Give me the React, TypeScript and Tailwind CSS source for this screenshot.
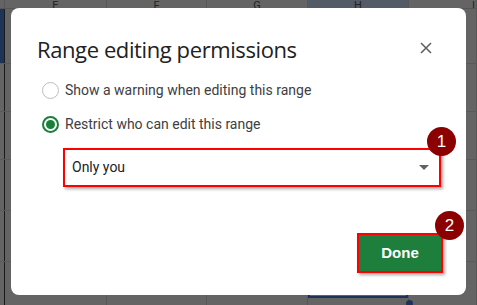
import React from "react";

const COLS = [
  { w: "w-[5px]", label: "", end: false },
  { w: "w-[102px]", label: "E", end: false },
  { w: "w-[100px]", label: "F", end: false },
  { w: "w-[101px]", label: "G", end: false },
  { w: "w-[101px]", label: "H", end: false },
  { w: "flex-1", label: "I", end: true },
];

const ROWS = ["h-[55px]", "h-[48px]", "h-[48px]", "h-[51px]", "h-[51px]", "h-[21px]", "flex-1"];

function Backdrop() {
  return (
    <div className="flex flex-col w-full h-full">
      <div className="flex h-[9px] border-b border-[#555]">
        {COLS.map((c, i) => (
          <div
            key={i}
            className={`${c.w} ${i === 4 ? "bg-[#535b67]" : ""} border-r border-[#575757] flex items-end ${
              c.end ? "justify-end pr-[1px]" : "justify-center"
            } overflow-hidden`}
          >
            <span className="text-[11px] leading-[11px] text-[#222] mb-[-3px]">{c.label}</span>
          </div>
        ))}
      </div>
      {ROWS.map((h, r) => (
        <div key={r} className={`flex ${h} ${r < 5 ? "border-b border-[#595959]" : ""}`}>
          {COLS.map((c, i) => (
            <div
              key={i}
              className={`${c.w} ${i === 0 ? "border-r border-[#1a1a1a]" : "border-r border-[#575757]"} ${
                i === 0 && r === 0 ? "bg-[#1d3458]" : ""
              } flex flex-col`}
            >
              {r === 6 && i === 4 ? (
                <div className="mt-[2px] h-[13px] border-x-2 border-b-2 border-[#1d3458]" />
              ) : null}
            </div>
          ))}
        </div>
      ))}
    </div>
  );
}

export default function App() {
  return (
    <div
      className="relative w-[477px] h-[305px] overflow-hidden bg-[#646464]"
      style={{ fontFamily: "Roboto, 'Liberation Sans', sans-serif" }}
    >
      <Backdrop />
      <div className="absolute left-[406px] top-[300px] w-[7px] h-[7px] rounded-full bg-[#1d3458]" />

      {/* dialog */}
      <div className="absolute left-[11px] top-[8px] w-[455px] h-[287px] bg-white rounded-[8px] flex flex-col">
        <div className="flex items-center justify-between pl-[26px] pr-[34px] pt-[27px]">
          <div
            className="text-[22px] leading-[28px] text-[#202124]"
            style={{ fontFamily: "'Open Sans', Roboto, sans-serif", letterSpacing: "-0.4px" }}
          >
            Range editing permissions
          </div>
          <svg width="12" height="12" viewBox="0 0 12 12" className="mb-[2px]">
            <path d="M1 1L11 11M11 1L1 11" stroke="#5f6368" strokeWidth="1.6" />
          </svg>
        </div>
        <div className="flex flex-col gap-[16px] pl-[31px] mt-[18px]">
          <div className="flex items-center gap-[6px] h-[18px]">
            <div className="w-[17px] h-[17px] rounded-full border border-[#bdbdbd]" />
            <span className="text-[14px] text-[#3c4043]">Show a warning when editing this range</span>
          </div>
          <div className="flex items-center gap-[6px] h-[18px]">
            <div className="w-[17px] h-[17px] rounded-full border-2 border-[#188038] flex items-center justify-center">
              <div className="w-[9px] h-[9px] rounded-full bg-[#188038]" />
            </div>
            <span className="text-[14px] text-[#3c4043]">Restrict who can edit this range</span>
          </div>
        </div>
        <div className="ml-[52px] mt-[15px] w-[378px] h-[39px] border-2 border-[#ff0000] shadow-[2px_2px_3px_rgba(0,0,0,0.35)] flex items-center justify-between pl-[7px] pr-[10px]">
          <span className="text-[14px] text-[#202124]">Only you</span>
          <svg width="10" height="5" viewBox="0 0 10 5">
            <path d="M0 0L10 0L5 5Z" fill="#5f6368" />
          </svg>
        </div>
        <div className="flex justify-end pr-[23px] mt-[46px]">
          <div className="w-[86px] h-[40px] border-2 border-[#ff0000] bg-[#1e7e3c] shadow-[2px_2px_3px_rgba(0,0,0,0.35)] flex items-center justify-center">
            <span
              className="text-[15px] font-bold text-white"
              style={{ fontFamily: "'Liberation Sans', Arial, sans-serif" }}
            >
              Done
            </span>
          </div>
        </div>
      </div>

      {/* badges */}
      <div
        className="absolute left-[427px] top-[127px] w-[29px] h-[29px] rounded-full bg-[#8b0000] flex items-center justify-center text-white text-[17px]"
        style={{ fontFamily: "'Liberation Sans', sans-serif" }}
      >
        1
      </div>
      <div
        className="absolute left-[435px] top-[211px] w-[29px] h-[29px] rounded-full bg-[#8b0000] flex items-center justify-center text-white text-[17px]"
        style={{ fontFamily: "'Liberation Sans', sans-serif" }}
      >
        2
      </div>
    </div>
  );
}
